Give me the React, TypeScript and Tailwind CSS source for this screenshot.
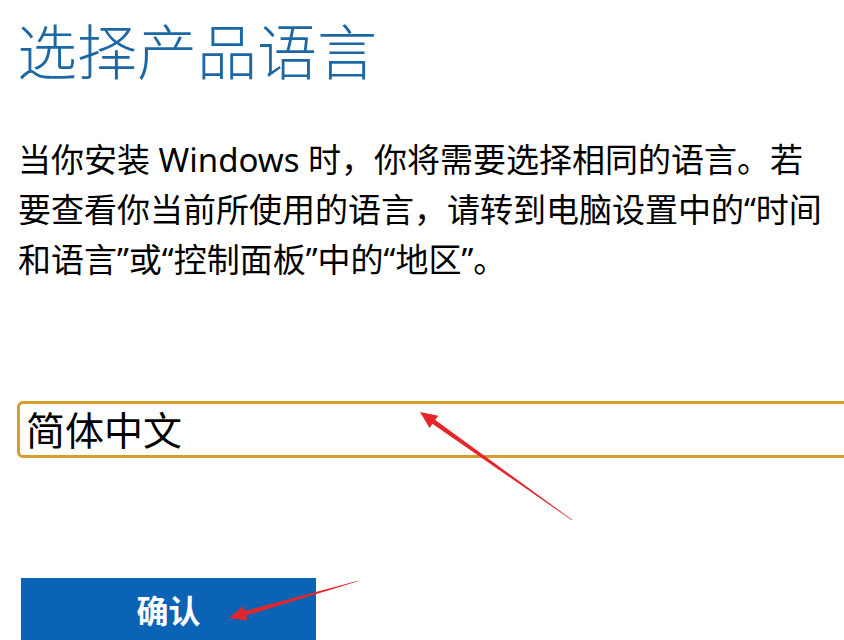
import React from "react";

type Pt = [number, number];

// tapered red annotation arrow, tip first
const Arrow = ({ tip, tail }: { tip: Pt; tail: Pt }) => {
    const dx = tail[0] - tip[0];
    const dy = tail[1] - tip[1];
    const len = Math.hypot(dx, dy);
    const ux = dx / len;
    const uy = dy / len;
    const px = -uy;
    const py = ux;
    const headLen = 17;
    const headW = 7.5;
    const bx = tip[0] + ux * headLen;
    const by = tip[1] + uy * headLen;
    const head = [
        tip,
        [bx + px * headW, by + py * headW],
        [bx - px * headW, by - py * headW],
    ];
    const w0 = 2.4;
    const w1 = 0.3;
    const shaft = [
        [bx - ux * 2 + px * w0, by - uy * 2 + py * w0],
        [tail[0] + px * w1, tail[1] + py * w1],
        [tail[0] - px * w1, tail[1] - py * w1],
        [bx - ux * 2 - px * w0, by - uy * 2 - py * w0],
    ];
    const s = (a: number[][]) => a.map(p => p.join(",")).join(" ");
    return (
        <g fill="#e3262b">
            <polygon points={s(shaft)} />
            <polygon points={s(head as number[][])} />
        </g>
    );
};

export default function App() {
    return (
        <div
            className="relative w-[844px] h-[640px] overflow-hidden bg-white"
            style={{ fontFamily: '"Noto Sans", "Noto Sans CJK SC", sans-serif' }}
        >
            {/* Title */}
            <h1 className="pt-[22px] pl-[17px] text-[60px] leading-none font-light text-[#1d67a5] whitespace-nowrap">
                选择产品语言
            </h1>

            {/* Description */}
            <div className="mt-[53px] pl-[18px] text-[33px] leading-[50px] text-black whitespace-nowrap">
                <div>当你安装 Windows 时，你将需要选择相同的语言。若</div>
                <div>要查看你当前所使用的语言，请转到电脑设置中的“时间</div>
                <div>和语言”或“控制面板”中的“地区”。</div>
            </div>

            {/* Language field */}
            <div className="mt-[116px] ml-[17px] w-[860px] h-[57px] border-[3.5px] border-[#d69d2c] rounded-[6px] flex items-center pl-[6px]">
                <span className="text-[39px] leading-none text-black">简体中文</span>
            </div>

            {/* Confirm button */}
            <div className="mt-[120px] ml-[21px] w-[295px] h-[72px] bg-[#0b63b6] flex items-center justify-center pb-[6px]">
                <span className="text-[32px] leading-none font-bold text-white">确认</span>
            </div>

            {/* Annotation arrows */}
            <svg className="absolute inset-0 pointer-events-none" width="844" height="640" viewBox="0 0 844 640">
                <Arrow tip={[420, 412]} tail={[572, 520]} />
                <Arrow tip={[229, 618]} tail={[358, 581]} />
            </svg>
        </div>
    );
}
